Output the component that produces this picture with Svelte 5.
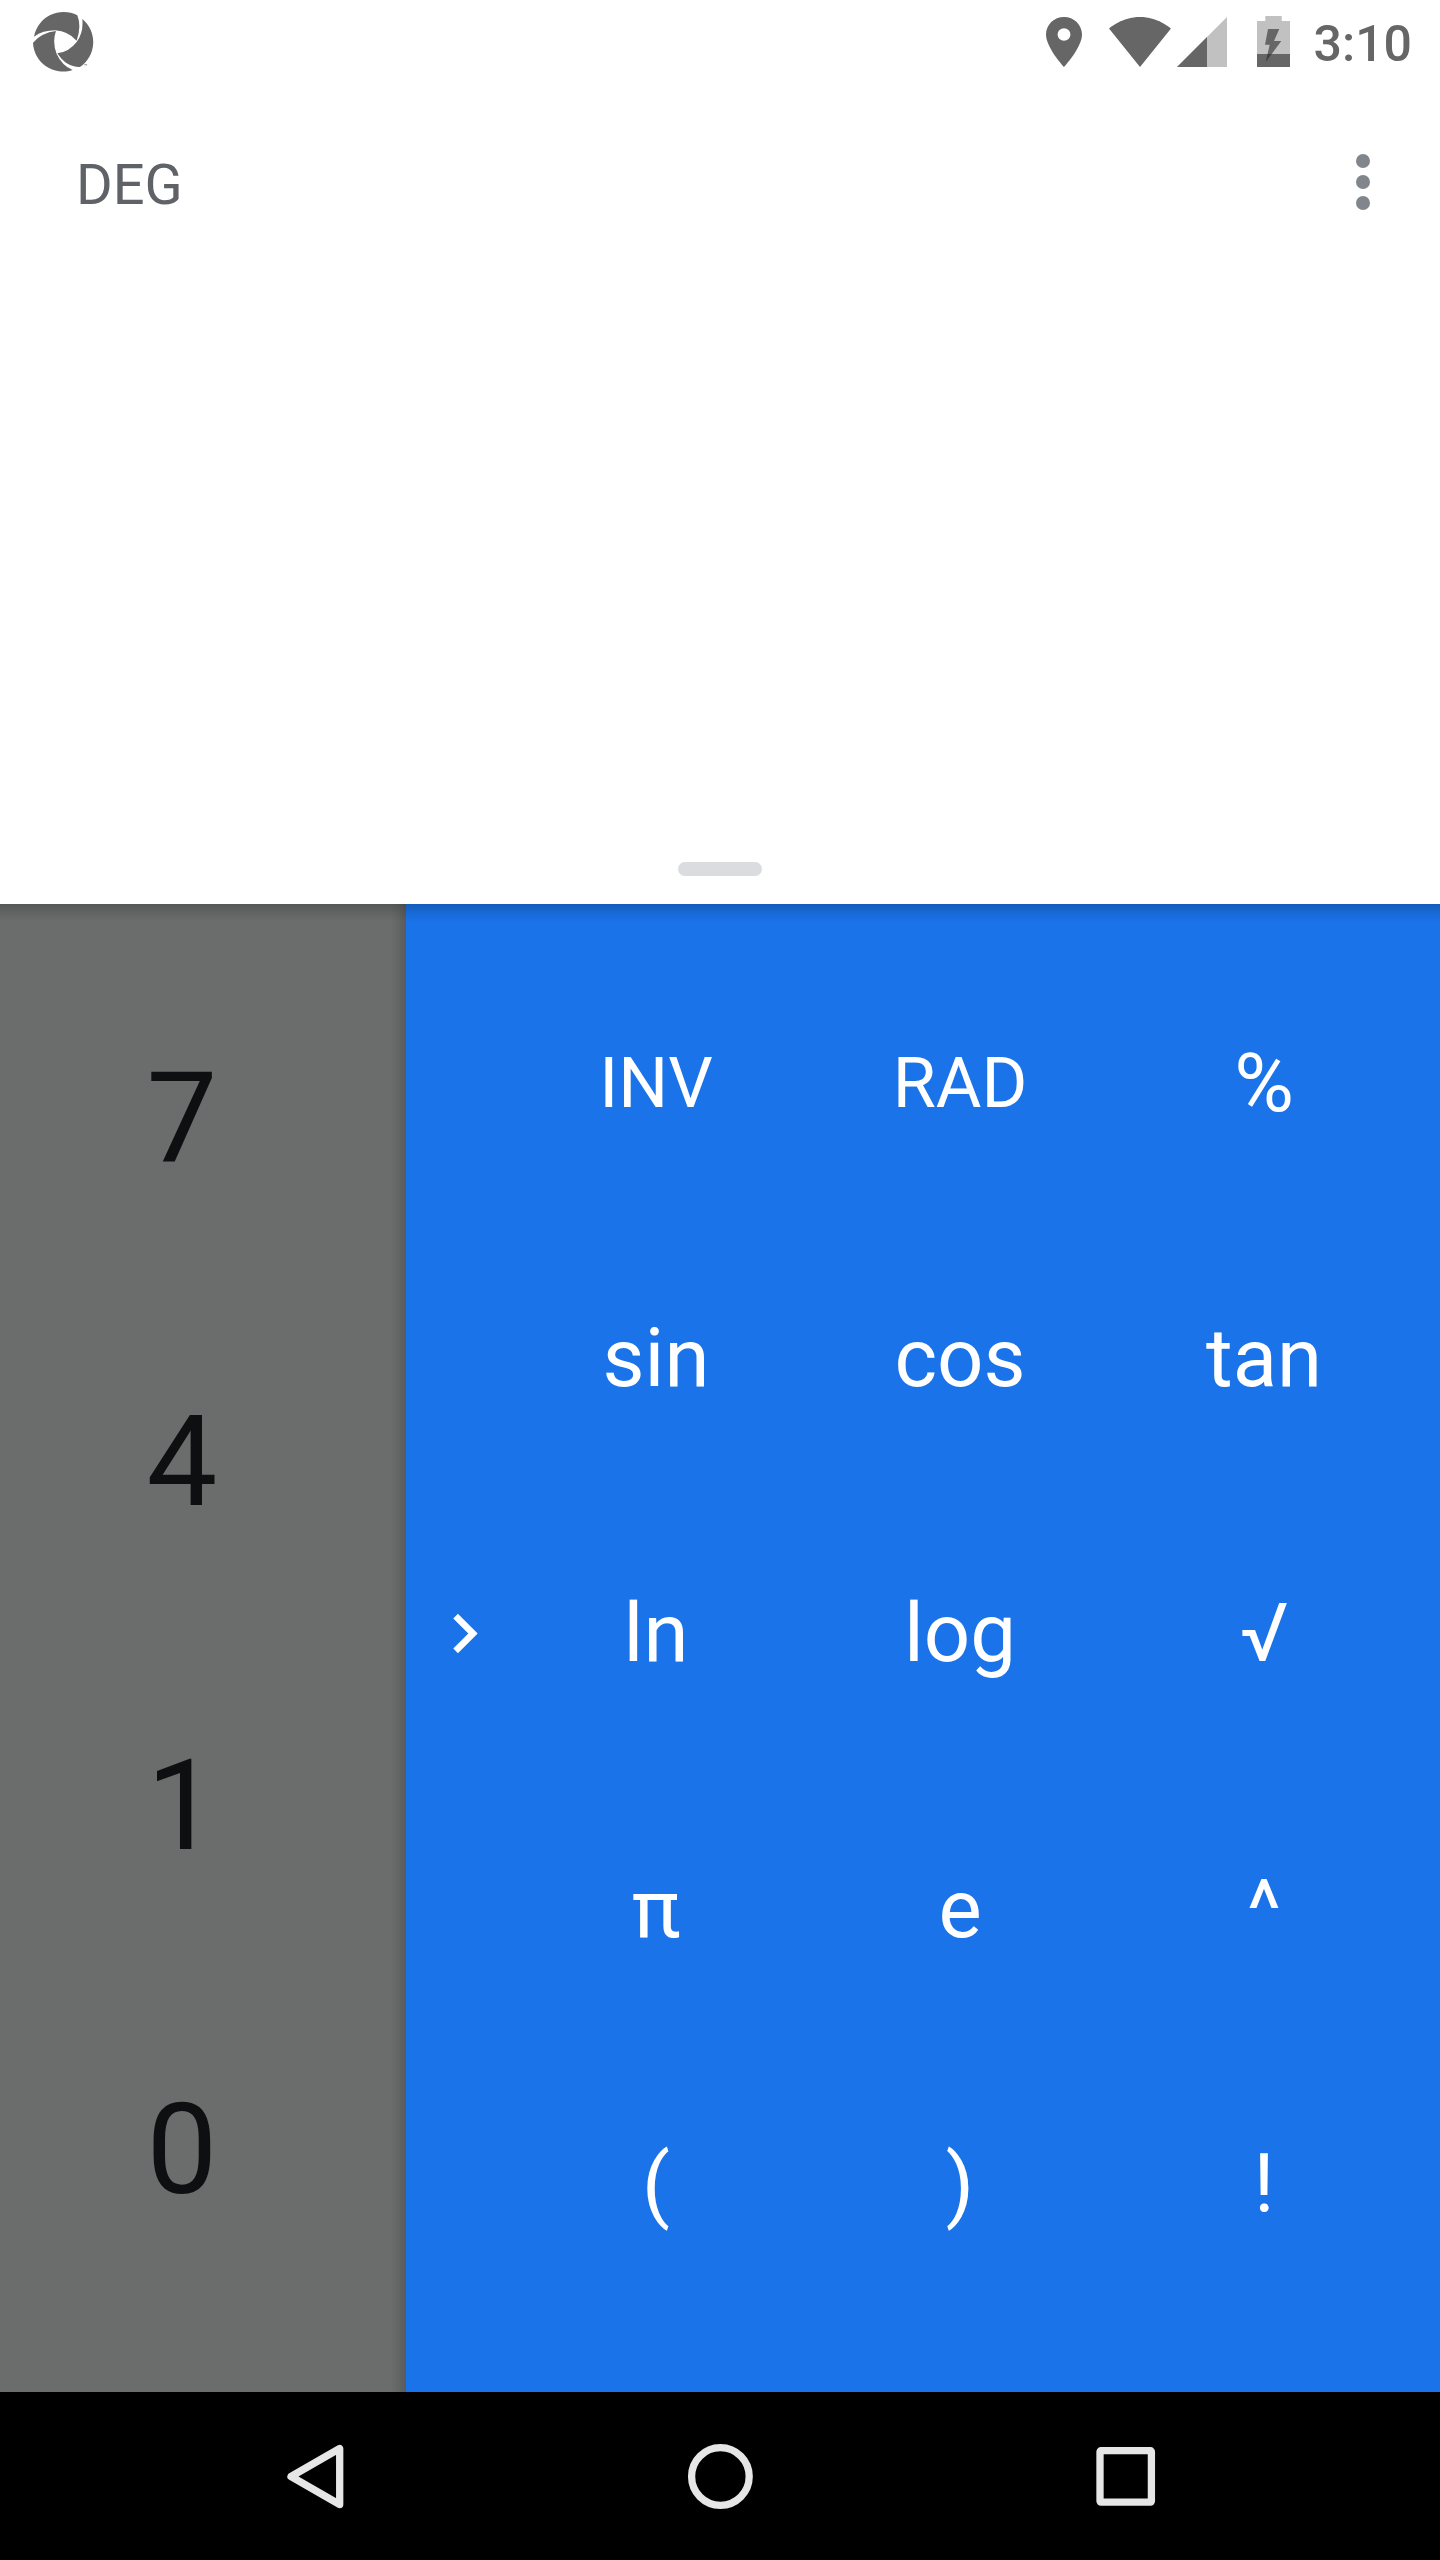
<script>
  const digits = ['7', '4', '1', '0'];
  const functions = [
    'INV', 'RAD', '%',
    'sin', 'cos', 'tan',
    'ln', 'log', '√',
    'π', 'e', '^',
    '(', ')', '!'
  ];
</script>

<div class="screen">
  <header class="status">
    <svg class="app-logo" viewBox="96 33 186 186" width="62" height="62" aria-hidden="true">
      <path d="M102 110A90 90 0 0 1 232 46Q245 80 230 122Q205 94 166 91Q128 91 102 110Z" />
      <path d="M247 57A90 90 0 0 1 240 201Q199 202 172 160Q207 156 230 126Q251 98 247 57Z" />
      <path d="M99 128A90 90 0 0 0 218 210Q186 197 170 162Q156 125 168 93Q125 98 99 128Z" />
      <text x="252" y="203" font-size="17">™</text>
    </svg>

    <div class="indicators">
      <svg class="pin" viewBox="5 2 14 20" width="36" height="50" preserveAspectRatio="none" aria-hidden="true">
        <path fill-rule="evenodd" d="M12 2C8.13 2 5 5.13 5 9c0 5.25 7 13 7 13s7-7.75 7-13c0-3.87-3.13-7-7-7zm0 9.5a2.5 2.5 0 1 1 0-5 2.5 2.5 0 0 1 0 5z" />
      </svg>
      <svg class="wifi" viewBox="0 0 62 50" width="62" height="50" aria-hidden="true">
        <path d="M31 50L62 11.5C60.500 10.500 49 0 31 0S1.500 10.500 0 11.500Z" />
      </svg>
      <svg class="signal" viewBox="0 0 50 50" width="50" height="50" aria-hidden="true">
        <path class="faint" d="M0 50L50 0V50Z" />
        <path d="M0 50L30 20V50Z" />
      </svg>
      <svg class="battery" viewBox="0 0 33 51" width="33" height="51" aria-hidden="true">
        <path class="faint" d="M0 5H8.300V0H24.700V5H33V51H0Z" />
        <path d="M0 38H33V51H0Z" />
        <path d="M11 13H22.300L17 25H24.300L8.700 46L12.700 28.700H8Z" />
        <path class="deep" d="M10.500 38H14.600L8.700 46Z" />
      </svg>
      <time>3:10</time>
    </div>
  </header>

  <section class="display">
    <div class="toolbar">
      <span class="mode">DEG</span>
      <button class="more" aria-label="More options"><i></i><i></i><i></i></button>
    </div>
    <div class="handle"></div>
  </section>

  <main class="pads">
    <div class="numeric">
      {#each digits as digit}
        <button class="digit">{digit}</button>
      {/each}
    </div>
    <div class="advanced">
      <button class="collapse" aria-label="Collapse">
        <svg viewBox="0 0 24 24" width="79" height="79" aria-hidden="true">
          <path d="M10 6L8.590 7.410 13.170 12l-4.580 4.590L10 18l6-6z" />
        </svg>
      </button>
      <div class="functions">
        {#each functions as label}
          <button class="fn" class:caps={label === 'INV' || label === 'RAD'}>{label}</button>
        {/each}
      </div>
    </div>
  </main>

  <nav class="navbar">
    <svg viewBox="0 0 90 90" width="90" height="90" aria-hidden="true">
      <path d="M69.700 18.500V74.500L21 46.500Z" />
    </svg>
    <svg viewBox="0 0 90 90" width="90" height="90" aria-hidden="true">
      <circle cx="45.400" cy="46.500" r="28.800" />
    </svg>
    <svg viewBox="0 0 90 90" width="90" height="90" aria-hidden="true">
      <rect x="20" y="20.700" width="51.400" height="51.400" rx="1" />
    </svg>
  </nav>
</div>

<style>
  :global(body) {
    margin: 0;
  }

  .screen {
    display: flex;
    flex-direction: column;
    width: 1440px;
    height: 2560px;
    overflow: hidden;
    background: #fff;
    font-family: Roboto, 'Liberation Sans', sans-serif;
  }

  button {
    display: flex;
    align-items: center;
    justify-content: center;
    margin: 0;
    padding: 0;
    border: 0;
    background: none;
    color: inherit;
    font: inherit;
  }

  svg {
    display: block;
    flex: none;
  }

  .status {
    display: flex;
    justify-content: space-between;
    box-sizing: border-box;
    height: 84px;
    padding: 11px 28px 0 32px;
    fill: #666;
    color: #666;
  }

  .indicators {
    display: flex;
    align-items: flex-start;
    padding-top: 6px;
  }

  .wifi {
    margin-left: 27px;
  }

  .signal {
    margin-left: 6px;
  }

  .battery {
    margin: -1px 24px 0 30px;
  }

  .faint {
    fill: #c1c1c1;
  }

  .deep {
    fill: #404040;
  }

  time {
    font-size: 50px;
    font-weight: 500;
    line-height: 58px;
    margin-top: -2px;
  }

  .display {
    display: flex;
    flex-direction: column;
    justify-content: space-between;
    align-items: center;
    box-sizing: border-box;
    height: 820px;
    padding: 65px 0 28px;
  }

  .toolbar {
    display: flex;
    justify-content: space-between;
    align-items: center;
    align-self: stretch;
    height: 66px;
    padding: 0 70px 0 76px;
  }

  .mode {
    margin-top: 6px;
    color: #5f6368;
    font-size: 56px;
    line-height: 66px;
  }

  .more {
    flex-direction: column;
    gap: 7px;
  }

  .more i {
    width: 14px;
    height: 14px;
    border-radius: 50%;
    background: #80868b;
  }

  .handle {
    width: 84px;
    height: 14px;
    border-radius: 7px;
    background: #dadce0;
  }

  .pads {
    position: relative;
    display: flex;
    height: 1488px;
  }

  /* Shadow that the display casts on both pads */
  .pads::before {
    content: '';
    position: absolute;
    inset: 0 0 auto;
    height: 18px;
    background: linear-gradient(rgba(0, 0, 0, 0.2), rgba(0, 0, 0, 0.09) 45%, transparent);
  }

  .numeric {
    display: grid;
    grid-template-rows: repeat(4, 344px);
    box-sizing: border-box;
    width: 406px;
    padding: 42px 42px 70px 0;
    background: linear-gradient(to left, rgba(0, 0, 0, 0.17), rgba(0, 0, 0, 0.06) 8px, transparent 16px) #6b6d6c;
    color: #0e0f11;
    font-size: 126px;
  }

  .advanced {
    display: flex;
    flex: 1;
    box-sizing: border-box;
    padding: 41.5px 24px 70.5px 19px;
    background: #1a73e8;
    color: #fff;
    fill: #fff;
  }

  .collapse {
    width: 79px;
  }

  .functions {
    display: grid;
    flex: 1;
    grid-template-columns: repeat(3, 1fr);
    grid-template-rows: repeat(5, 1fr);
    font-size: 81.5px;
  }

  .caps {
    font-size: 70px;
  }

  .navbar {
    display: flex;
    justify-content: center;
    gap: 315px;
    box-sizing: border-box;
    height: 168px;
    padding-top: 38px;
    background: #000;
    fill: none;
    stroke: #e6e6e6;
    stroke-width: 7.300;
    stroke-linejoin: round;
  }
</style>
